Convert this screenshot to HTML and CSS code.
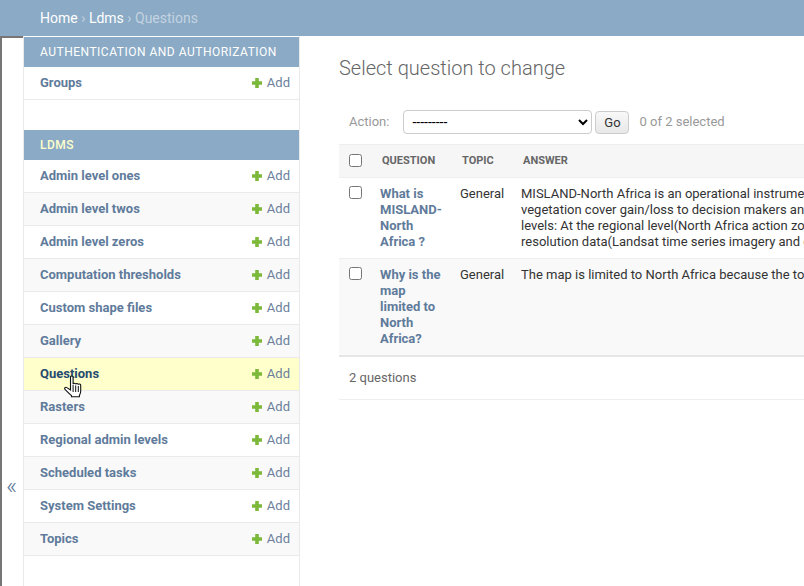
FILE: index.html
```html
<!DOCTYPE html>
<html>
<head>
  <title>Select question to change</title>
  <link rel="stylesheet" href="styles.css">
</head>
<body>
  <div class="breadcrumbs">
    <a href="#">Home</a> <span class="sep">›</span> <a href="#">Ldms</a> <span class="sep">›</span> Questions
  </div>
  <div class="main">
    <button class="nav-toggle">«</button>
    <nav class="sidebar">
      <div class="app">
        <div class="caption">Authentication and Authorization</div>
        <div class="model row1"><a href="#">Groups</a><a class="add" href="#"><svg class="plus" viewBox="0 0 10 10"><path d="M3.2 0h3.600v3.200H10v3.600H6.800V10H3.200V6.800H0V3.200h3.200z"/></svg>Add</a></div>
      </div>
      <div class="app">
        <div class="caption current">Ldms</div>
        <div class="model row1"><a href="#">Admin level ones</a><a class="add" href="#"><svg class="plus" viewBox="0 0 10 10"><path d="M3.2 0h3.600v3.200H10v3.600H6.800V10H3.200V6.800H0V3.200h3.200z"/></svg>Add</a></div>
        <div class="model row2"><a href="#">Admin level twos</a><a class="add" href="#"><svg class="plus" viewBox="0 0 10 10"><path d="M3.2 0h3.600v3.200H10v3.600H6.800V10H3.200V6.800H0V3.200h3.200z"/></svg>Add</a></div>
        <div class="model row1"><a href="#">Admin level zeros</a><a class="add" href="#"><svg class="plus" viewBox="0 0 10 10"><path d="M3.2 0h3.600v3.200H10v3.600H6.800V10H3.200V6.800H0V3.200h3.200z"/></svg>Add</a></div>
        <div class="model row2"><a href="#">Computation thresholds</a><a class="add" href="#"><svg class="plus" viewBox="0 0 10 10"><path d="M3.2 0h3.600v3.200H10v3.600H6.800V10H3.200V6.800H0V3.200h3.200z"/></svg>Add</a></div>
        <div class="model row1"><a href="#">Custom shape files</a><a class="add" href="#"><svg class="plus" viewBox="0 0 10 10"><path d="M3.2 0h3.600v3.200H10v3.600H6.800V10H3.200V6.800H0V3.200h3.200z"/></svg>Add</a></div>
        <div class="model row2"><a href="#">Gallery</a><a class="add" href="#"><svg class="plus" viewBox="0 0 10 10"><path d="M3.2 0h3.600v3.200H10v3.600H6.800V10H3.200V6.800H0V3.200h3.200z"/></svg>Add</a></div>
        <div class="model current"><a href="#">Questions</a><a class="add" href="#"><svg class="plus" viewBox="0 0 10 10"><path d="M3.2 0h3.600v3.200H10v3.600H6.800V10H3.200V6.800H0V3.200h3.200z"/></svg>Add</a>
          <svg class="hand" viewBox="0 0 18 24"><path d="M6.500 2.200c0-1.600 2.600-1.600 2.600 0v7c.1-1.300 2.500-1.300 2.600.1.200-1.200 2.500-1.100 2.600.3.300-1 2.400-.8 2.400.6v5.800c0 2.200-.7 3.300-1.300 4.500v1.200H7.500v-1C5.500 19 3 16.400 1 14.400c-1-1.300.5-2.800 1.900-1.800L6.500 15z" fill="#fff" stroke="#111" stroke-width="1.100"/><path d="M9.100 10v7M11.700 10.500V17M14.300 11v6" fill="none" stroke="#111" stroke-width="1"/></svg>
        </div>
        <div class="model row2"><a href="#">Rasters</a><a class="add" href="#"><svg class="plus" viewBox="0 0 10 10"><path d="M3.2 0h3.600v3.200H10v3.600H6.800V10H3.200V6.800H0V3.200h3.200z"/></svg>Add</a></div>
        <div class="model row1"><a href="#">Regional admin levels</a><a class="add" href="#"><svg class="plus" viewBox="0 0 10 10"><path d="M3.2 0h3.600v3.200H10v3.600H6.800V10H3.200V6.800H0V3.200h3.200z"/></svg>Add</a></div>
        <div class="model row2"><a href="#">Scheduled tasks</a><a class="add" href="#"><svg class="plus" viewBox="0 0 10 10"><path d="M3.2 0h3.600v3.200H10v3.600H6.800V10H3.200V6.800H0V3.200h3.200z"/></svg>Add</a></div>
        <div class="model row1"><a href="#">System Settings</a><a class="add" href="#"><svg class="plus" viewBox="0 0 10 10"><path d="M3.2 0h3.600v3.200H10v3.600H6.800V10H3.200V6.800H0V3.200h3.200z"/></svg>Add</a></div>
        <div class="model row2"><a href="#">Topics</a><a class="add" href="#"><svg class="plus" viewBox="0 0 10 10"><path d="M3.2 0h3.600v3.200H10v3.600H6.800V10H3.200V6.800H0V3.200h3.200z"/></svg>Add</a></div>
      </div>
    </nav>
    <div class="content">
      <h1>Select question to change</h1>
      <div class="actions">
        <label>Action:</label>
        <select class="action-select"><option>---------</option></select>
        <button class="go">Go</button>
        <span class="counter">0 of 2 selected</span>
      </div>
      <table class="results">
        <thead>
          <tr>
            <th class="check"><input type="checkbox"></th>
            <th class="col-q">Question</th>
            <th class="col-t">Topic</th>
            <th class="col-a">Answer</th>
          </tr>
        </thead>
        <tbody>
          <tr class="row1">
            <td class="check"><input type="checkbox"></td>
            <th class="col-q"><a href="#">What is MISLAND-North Africa ?</a></th>
            <td class="col-t">General</td>
            <td class="col-a">MISLAND-North Africa is an operational instrument that provides land degradation and<br>vegetation cover gain/loss to decision makers and stakeholders at two different<br>levels: At the regional level(North Africa action zone) and the pilot site level with high<br>resolution data(Landsat time series imagery and derived products).</td>
          </tr>
          <tr class="row2">
            <td class="check"><input type="checkbox"></td>
            <th class="col-q"><a href="#">Why is the map limited to North Africa?</a></th>
            <td class="col-t">General</td>
            <td class="col-a">The map is limited to North Africa because the tool was designed for that region.</td>
          </tr>
        </tbody>
      </table>
      <p class="paginator">2 questions</p>
    </div>
  </div>
</body>
</html>
```

FILE: styles.css
```css
html, body {
  margin: 0;
  padding: 0;
  height: 100%;
  overflow: hidden;
}
body {
  font-family: Roboto, "Liberation Sans", sans-serif;
  font-size: 14px;
  color: #333;
  background: #fff;
}
a {
  text-decoration: none;
  color: #5f7b9b;
}

.breadcrumbs {
  box-sizing: border-box;
  height: 36px;
  padding: 10px 40px;
  background: #8aaac5;
  color: #c4d3e1;
  font-size: 14px;
  line-height: 16px;
}
.breadcrumbs a {
  color: #fff;
}

.main {
  display: flex;
  height: 550px;
}
.nav-toggle {
  box-sizing: border-box;
  flex: 0 0 23px;
  margin: 0;
  padding: 347px 2px 0 0;
  border: 0;
  border-left: 2px solid #767676;
  border-top: 2px solid #767676;
  background: #fff;
  color: #5f7b9b;
  font-family: Roboto, sans-serif;
  font-size: 24px;
  font-weight: 300;
  line-height: 1;
}
.sidebar {
  box-sizing: border-box;
  flex: 0 0 277px;
  min-width: 0;
  padding-top: 1px;
  border-left: 1px solid #eaeaea;
  border-right: 1px solid #eaeaea;
}
.app {
  margin-bottom: 30px;
}
.caption {
  box-sizing: border-box;
  height: 30px;
  padding: 8px 16px;
  background: #8aaac5;
  color: #fff;
  font-size: 12px;
  line-height: 14px;
  letter-spacing: 0.5px;
  white-space: nowrap;
  text-transform: uppercase;
}
.caption.current {
  color: #ffc;
  font-weight: 500;
}
.model {
  position: relative;
  box-sizing: border-box;
  display: flex;
  justify-content: space-between;
  height: 33px;
  padding: 8px 9px 8px 16px;
  border-bottom: 1px solid #eaeaea;
  font-size: 13px;
  line-height: 16px;
}
.model > a:first-child {
  font-weight: 700;
}
.row1 { background: #fff; }
.row2 { background: #f9f9f9; }
.model.current {
  z-index: 1; /* the cursor hangs over the next row */
  background: #ffc;
}
.model.current > a:first-child {
  color: #264b6e;
}
.add {
  display: flex;
  align-items: center;
  color: #6b7f9c;
}
.plus {
  width: 10px;
  height: 10px;
  margin-right: 5px;
  fill: #7cb83a;
}
.hand {
  position: absolute;
  left: 40px;
  top: 17px;
  width: 18px;
  height: 24px;
}

.content {
  flex: 1;
  min-width: 0;
  overflow: hidden;
  padding: 20px 0 0 39px;
}
h1 {
  margin: 0 0 30px;
  font-size: 20px;
  line-height: 24px;
  font-weight: 300;
  color: #666;
}
.actions {
  display: flex;
  align-items: flex-start;
  height: 34px;
  padding-left: 10px;
  color: #999;
  font-size: 13px;
  line-height: 24px;
}
.action-select {
  box-sizing: border-box;
  width: 189px;
  height: 24px;
  margin-left: 14px;
  padding: 0 4px;
  border: 1px solid #ccc;
  border-radius: 4px;
  background: #fff;
  font-family: Roboto, sans-serif;
  font-size: 14px;
  color: #000;
}
.go {
  box-sizing: border-box;
  width: 34px;
  height: 23px;
  margin: 1px 0 0 3px;
  padding: 0;
  border: 1px solid #ccc;
  border-radius: 4px;
  background: linear-gradient(#f8f8f8, #e8e8e8);
  font-family: Roboto, sans-serif;
  font-size: 13px;
  color: #333;
}
.counter {
  margin-left: 10px;
}

.results {
  border-collapse: collapse;
  table-layout: fixed;
  width: 900px;
  border-bottom: 2px solid #e6e6e6;
}
.results thead th {
  box-sizing: border-box;
  height: 33px;
  padding: 0 0 2px;
  background: #f6f6f6;
  border-top: 1px solid #eee;
  border-bottom: 1px solid #eee;
  color: #666;
  font-size: 11px;
  font-weight: 700;
  text-align: left;
  text-transform: uppercase;
}
.results .check {
  width: 41px;
  padding-left: 10px;
  box-sizing: border-box;
}
.results input {
  display: block;
  width: 13px;
  height: 13px;
  margin: 0;
}
.col-q { width: 80px; }
.col-t { width: 61px; }
.results thead .col-q,
.results thead .col-t,
.results thead .col-a {
  padding-left: 2px;
}
.results tbody td,
.results tbody th {
  padding: 8px 0;
  vertical-align: top;
  font-size: 13px;
  line-height: 16px;
  text-align: left;
  border-bottom: 1px solid #eee;
}
.results tbody .check {
  padding-top: 8px;
  padding-left: 10px;
}
.results tbody th {
  font-weight: 700;
  padding-right: 14px;
}
.results tbody .col-a {
  white-space: nowrap;
}
.paginator {
  box-sizing: border-box;
  margin: 0;
  height: 43px;
  padding: 13px 10px;
  font-size: 13px;
  line-height: 16px;
  color: #666;
  border-bottom: 1px solid #eee;
}
```
